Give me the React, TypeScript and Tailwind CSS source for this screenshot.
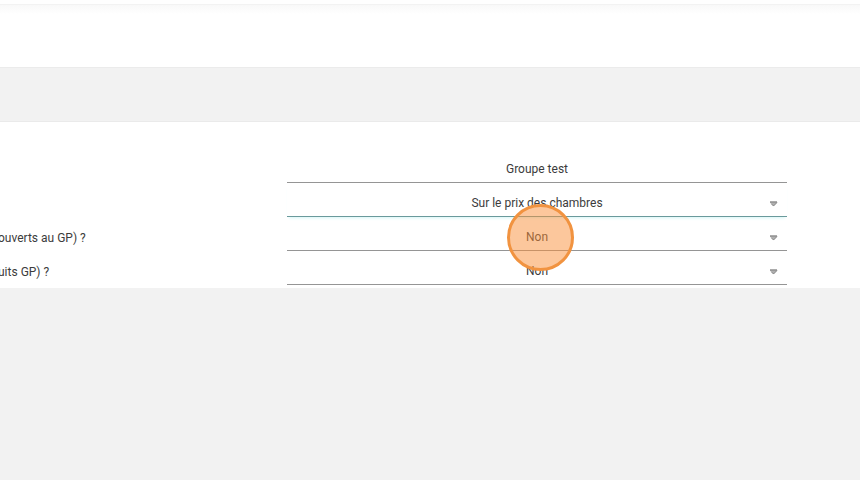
import type { ReactNode } from "react";

const control =
  "block h-[34px] w-full appearance-none rounded-none border-b bg-transparent px-6 pt-[7px] text-center text-xs text-[#3c3c3c] outline-none";

function Row({ id, label, children }: { id: string; label?: string; children: ReactNode }) {
  return (
    <div className="grid grid-cols-[minmax(0,287fr)_minmax(0,500fr)_minmax(0,73fr)] items-center">
      <label htmlFor={id} className="-ml-0.5 pt-2 text-xs whitespace-nowrap text-[#3c3c3c]">
        {label}
      </label>
      <div className="relative">{children}</div>
    </div>
  );
}

function Arrow() {
  return (
    <svg className="pointer-events-none absolute top-[18px] right-[9px] h-[6px] w-[9px]" viewBox="0 0 9 6" aria-hidden="true">
      <path d="M1 0.5H8L8 1.8L4.5 5.3L1 1.8Z" fill="#b0b0b0" />
      <path d="M1 1H8" stroke="#808080" strokeWidth="1" />
      <path d="M8 1.5L4.5 5L2.5 3" fill="none" stroke="#858585" strokeWidth="0.9" />
    </svg>
  );
}

function Choice({ id, name, options, active }: { id: string; name?: string; options: string[]; active?: boolean }) {
  return (
    <>
      <select
        id={id}
        aria-label={name}
        defaultValue={options[0]}
        className={`${control} ${active ? "border-[#6a9a9c] shadow-[0_3px_3px_-2px_#d5f6f6]" : "border-[#959595]"}`}
      >
        {options.map((option) => (
          <option key={option}>{option}</option>
        ))}
      </select>
      <Arrow />
    </>
  );
}

export default function App() {
  return (
    <div className="min-h-screen overflow-x-hidden bg-[#f2f2f2] font-[Roboto,sans-serif]">
      <div className="h-1 bg-[#fefefe]" />
      <header className="h-16 border-t border-b border-t-[#f2f2f2] border-b-[#ebebeb] bg-white bg-linear-to-b from-[#f8f8f8] to-white to-[9px]" />
      <div className="h-[54px] border-b border-[#eaeaea]" />
      <form className="bg-white pt-[27px] pb-[3px]">
        <Row id="nom">
          <input
            id="nom"
            aria-label="Nom"
            type="text"
            defaultValue="Groupe test"
            className={`${control} border-[#959595]`}
          />
        </Row>
        <Row id="base">
          <Choice id="base" name="Base" options={["Sur le prix des chambres"]} active />
        </Row>
        <Row id="ouverts" label="ouverts au GP) ?">
          <Choice id="ouverts" options={["Non", "Oui"]} />
          <span className="pointer-events-none absolute -top-[13px] left-[44%] z-10 size-[67px] rounded-full border-3 border-[#f19340] bg-[#f98f3a]/50" />
        </Row>
        <Row id="produits" label="uits GP) ?">
          <Choice id="produits" options={["Non", "Oui"]} />
        </Row>
      </form>
    </div>
  );
}
